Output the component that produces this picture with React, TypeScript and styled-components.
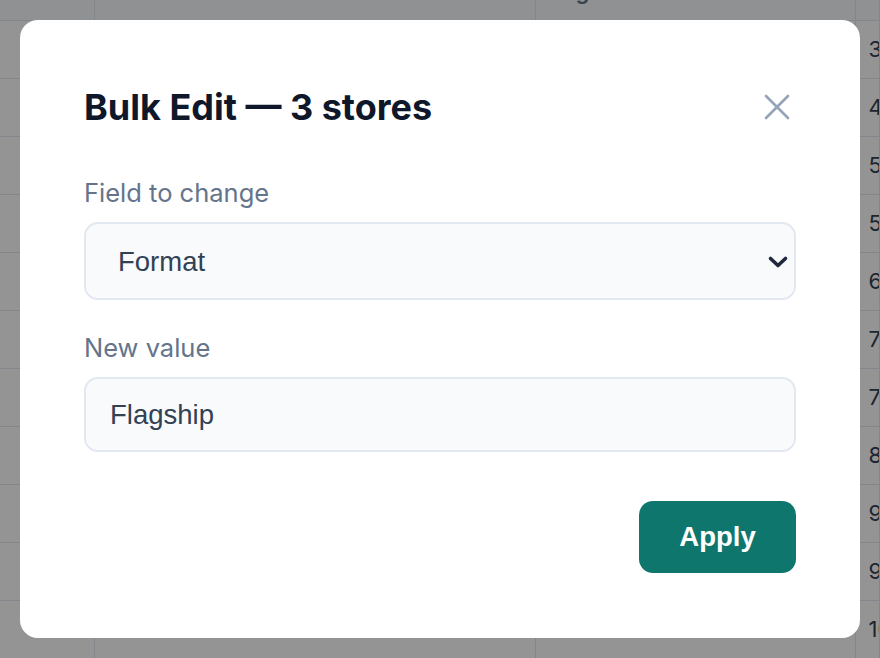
import * as React from 'react';
import styled, { createGlobalStyle } from 'styled-components';

const GlobalStyle = createGlobalStyle`
  html, body {
    margin: 0;
    padding: 0;
    background: #ffffff;
    font-family: Inter, 'Liberation Sans', sans-serif;
    overflow: hidden;
  }
`;

const rows = [
  { id: 'S-101', name: 'Harbor Point', region: 'Northeast', sales: '3,420' },
  { id: 'S-102', name: 'Maple Commons', region: 'Midwest', sales: '4,180' },
  { id: 'S-103', name: 'Riverside Mall', region: 'South', sales: '5,010' },
  { id: 'S-104', name: 'Cedar Plaza', region: 'West', sales: '5,760' },
  { id: 'S-105', name: 'Union Square', region: 'Northeast', sales: '6,230' },
  { id: 'S-106', name: 'Lakeshore', region: 'Midwest', sales: '7,090' },
  { id: 'S-107', name: 'Pine Valley', region: 'West', sales: '7,540' },
  { id: 'S-108', name: 'Oak Terrace', region: 'South', sales: '8,310' },
  { id: 'S-109', name: 'Bayview', region: 'West', sales: '9,050' },
  { id: 'S-110', name: 'Summit Park', region: 'Northeast', sales: '9,870' },
  { id: 'S-111', name: 'Granite Row', region: 'South', sales: '10,420' },
];

const Page = styled.div`
  width: 100vw;
  height: 100vh;
  overflow: hidden;
`;

const Table = styled.table`
  border-collapse: collapse;
  width: 100%;
  table-layout: fixed;
  margin-top: -38px;
  font-size: 22px;
  color: #334155;
`;

const Th = styled.th<{ $w?: number }>`
  box-sizing: border-box;
  width: ${p => (p.$w ? `${p.$w}px` : 'auto')};
  height: 58px;
  padding: 0 13px;
  text-align: left;
  font-weight: 600;
  color: #64748b;
  white-space: nowrap;
  overflow: hidden;
  border-bottom: 1px solid #e2e8f0;
  border-right: 1px solid #e2e8f0;
  background: #f8fafc;
`;

const Td = styled.td<{ $muted?: boolean }>`
  box-sizing: border-box;
  height: 58px;
  padding: 0 13px;
  color: ${p => (p.$muted ? '#94a3b8' : '#334155')};
  white-space: nowrap;
  overflow: hidden;
  border-bottom: 1px solid #e2e8f0;
  border-right: 1px solid #e2e8f0;
`;

const Overlay = styled.div`
  position: fixed;
  inset: 0;
  background: rgba(0, 0, 0, 0.42);
  display: flex;
  align-items: center;
  justify-content: center;
`;

const Modal = styled.div`
  width: 840px;
  box-sizing: border-box;
  background: #ffffff;
  border-radius: 18px;
  padding: 65px 64px 65px;
  display: flex;
  flex-direction: column;
`;

const Header = styled.div`
  display: flex;
  align-items: center;
  justify-content: space-between;
  margin-bottom: 48px;
`;

const Title = styled.h2`
  margin: 0;
  font-size: 36px;
  line-height: 44px;
  font-weight: 700;
  color: #0f172a;
`;

const CloseButton = styled.button`
  border: none;
  background: none;
  padding: 0;
  margin-right: 6px;
  width: 26px;
  height: 26px;
  display: flex;
  cursor: pointer;
`;

const Label = styled.label`
  display: block;
  font-size: 25.5px;
  line-height: 31px;
  color: #64748b;
  margin-bottom: 14px;
`;

const Field = styled.div`
  position: relative;
  margin-bottom: 32px;
`;

const fieldBox = `
  display: block;
  width: 100%;
  box-sizing: border-box;
  border: 2px solid #e2e8f0;
  border-radius: 14px;
  background: #f8fafc;
  color: #334155;
  font-family: 'Liberation Sans', Arial, sans-serif;
  font-size: 27.5px;
  outline: none;
`;

const Select = styled.select`
  ${fieldBox}
  appearance: none;
  height: 78px;
  padding: 0 60px 0 32px;
`;

const Chevron = styled.svg`
  position: absolute;
  right: 7px;
  bottom: 31px;
  pointer-events: none;
`;

const Input = styled.input`
  ${fieldBox}
  height: 75px;
  padding: 0 24px;
`;

const Footer = styled.div`
  display: flex;
  justify-content: flex-end;
  margin-top: 49px;
`;

const ApplyButton = styled.button`
  width: 157px;
  height: 72px;
  border: none;
  border-radius: 14px;
  background: #0f766e;
  color: #ffffff;
  font-family: 'Liberation Sans', Arial, sans-serif;
  font-weight: 700;
  font-size: 27.5px;
  cursor: pointer;
`;

export default function App() {
  return (
    <Page>
      <GlobalStyle />
      <Table>
        <thead>
          <tr>
            <Th $w={94}></Th>
            <Th $w={441}>Store name</Th>
            <Th $w={320}>Region</Th>
            <Th>Sales</Th>
          </tr>
        </thead>
        <tbody>
          {rows.map(r => (
            <tr key={r.id}>
              <Td $muted></Td>
              <Td>{r.name}</Td>
              <Td>{r.region}</Td>
              <Td>{r.sales}</Td>
            </tr>
          ))}
        </tbody>
      </Table>
      <Overlay>
        <Modal role="dialog">
          <Header>
            <Title>Bulk Edit — 3 stores</Title>
            <CloseButton aria-label="Close">
              <svg width="26" height="26" viewBox="0 0 26 26" fill="none">
                <path d="M2 2 L24 24 M24 2 L2 24" stroke="#94a3b8" strokeWidth="2.6" strokeLinecap="round" />
              </svg>
            </CloseButton>
          </Header>
          <Label htmlFor="field">Field to change</Label>
          <Field>
            <Select id="field" defaultValue="format">
              <option value="format">Format</option>
              <option value="region">Region</option>
              <option value="manager">Manager</option>
            </Select>
            <Chevron width="22" height="14" viewBox="0 0 22 14" fill="none">
              <path d="M3.5 3.5 L11 10.5 L18.5 3.5" stroke="#1e293b" strokeWidth="3.6" strokeLinecap="round" strokeLinejoin="round" />
            </Chevron>
          </Field>
          <Label htmlFor="value">New value</Label>
          <Input id="value" defaultValue="Flagship" />
          <Footer>
            <ApplyButton>Apply</ApplyButton>
          </Footer>
        </Modal>
      </Overlay>
    </Page>
  );
}
